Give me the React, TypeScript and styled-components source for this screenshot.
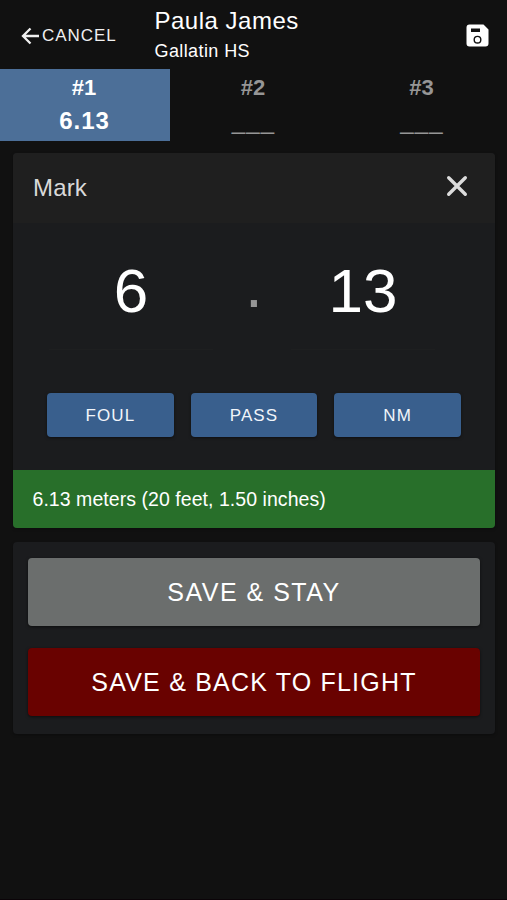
import React from "react";
import styled, { createGlobalStyle } from "styled-components";

const GlobalStyle = createGlobalStyle`
  *, *::before, *::after { box-sizing: border-box; }
  body {
    margin: 0;
    background: #111111;
    color: #ffffff;
    font-family: "Liberation Sans", Arial, sans-serif;
  }
  button { font: inherit; color: inherit; border: 0; padding: 0; background: none; }
`;

const Screen = styled.main`
  width: 507px;
  height: 900px;
  overflow: hidden;
  background: #111111;
  border-bottom: 1px solid #0b0408;
`;

const Header = styled.header`
  display: flex;
  align-items: flex-start;
  height: 69px;
  padding: 0 18px 0 21px;
`;

const CancelButton = styled.button`
  display: flex;
  align-items: center;
  width: 133.5px;
  height: 71px;
  font-size: 17px;
  letter-spacing: 0.95px;
  color: #f0f0f0;

  svg { margin-right: 2px; flex: none; }
`;

const Athlete = styled.div`
  flex: 1;
  padding-top: 6px;
  white-space: nowrap;
`;

const AthleteName = styled.h1`
  margin: 0;
  font-size: 24px;
  font-weight: 400;
  line-height: 30px;
  letter-spacing: 0.5px;
`;

const School = styled.div`
  font-size: 18px;
  line-height: 30px;
  letter-spacing: 0.4px;
`;

const SaveIconButton = styled.button`
  display: flex;
  align-items: center;
  height: 70px;
`;

const Attempts = styled.nav`
  display: grid;
  grid-template-columns: 170px 168px 169px;
  height: 72px;
`;

const Attempt = styled.button<{ $active?: boolean }>`
  display: flex;
  flex-direction: column;
  align-items: center;
  padding: 2px 1px 0 0;
  font-weight: 700;
  color: ${(p) => (p.$active ? "#ffffff" : "#969696")};
  background: ${(p) => (p.$active ? "#4c6f98" : "transparent")};
`;

const AttemptNumber = styled.span`
  padding-right: 1px;
  font-size: 22px;
  line-height: 33px;
`;

const AttemptMark = styled.span<{ $empty?: boolean }>`
  font-size: 24px;
  line-height: 34px;
  letter-spacing: ${(p) => (p.$empty ? "1.2px" : "0.9px")};
  font-weight: ${(p) => (p.$empty ? 400 : 700)};
`;

const Card = styled.section`
  margin: 12px 12px 0 13px;
  border-radius: 4px;
  overflow: hidden;
  background: #1b1c1e;
  box-shadow: 0 1px 3px rgba(0, 0, 0, 0.35);
`;

const CardHeader = styled.div`
  display: flex;
  align-items: center;
  justify-content: space-between;
  height: 70px;
  padding: 0 27px 0 20px;
  background: #1f1f1f;
  color: #d9d9d9;
`;

const CardTitle = styled.h2`
  margin: 0;
  font-size: 24px;
  font-weight: 400;
  letter-spacing: 0.15px;
`;

const CloseButton = styled.button`
  display: flex;
  margin-top: -5px;
`;

const MarkFields = styled.div`
  display: grid;
  grid-template-columns: 164px 78px 144px;
  padding-left: 36px;
  height: 127px;
`;

const MarkField = styled.div`
  padding-top: 30px;
  border-bottom: 1px solid #1e1f20;
  text-align: center;
  font-size: 62px;
  line-height: 76px;
`;

const DecimalPoint = styled.div`
  padding: 35px 0 0 4px;
  text-align: center;
  font-size: 64px;
  line-height: 54px;
  color: #969696;
`;

const QuickMarks = styled.div`
  display: grid;
  grid-template-columns: repeat(3, 1fr);
  gap: 17px;
  padding: 43px 34px 33px;
`;

const QuickMark = styled.button`
  height: 44px;
  padding-top: 1px;
  border-radius: 4px;
  background: #395f8d;
  color: #f1f5fa;
  font-size: 17px;
  letter-spacing: 1.1px;
  box-shadow: 0 1px 3px rgba(0, 0, 0, 0.5);
`;

const Conversion = styled.div`
  height: 58px;
  padding-left: 19.5px;
  background: #286f2a;
  font-size: 19.5px;
  line-height: 58px;
  letter-spacing: 0.05px;
  white-space: nowrap;
`;

const SaveActions = styled(Card)`
  display: grid;
  gap: 22px;
  margin-top: 14px;
  padding: 16px 15px 18px;
`;

const SaveButton = styled.button<{ $primary?: boolean }>`
  height: 68px;
  border-radius: 4px;
  background: ${(p) => (p.$primary ? "#690200" : "#6b6e6d")};
  font-size: 25px;
  letter-spacing: ${(p) => (p.$primary ? "1.2px" : "1.5px")};
  white-space: nowrap;
  box-shadow: 0 1px 3px rgba(0, 0, 0, 0.55);
`;

const ArrowIcon = () => (
  <svg width="19" height="18" viewBox="0 0 19 18" fill="none" stroke="#f0f0f0" strokeWidth="2.3">
    <path d="M9.5 1.5 2 9l7.5 7.5M2 9h16" />
  </svg>
);

const FloppyIcon = () => (
  <svg width="23" height="23" viewBox="0 0 23 23">
    <path
      fill="#fff"
      fillRule="evenodd"
      d="M3.5.5h14L22.5 5.5v14a3 3 0 0 1-3 3h-16a3 3 0 0 1-3-3v-16a3 3 0 0 1 3-3ZM5 4.5v3.4h9V4.5ZM11.5 11.7a4 4 0 1 0 0 8 4 4 0 0 0 0-8Z"
    />
    <circle cx="11.5" cy="15.7" r="2.6" fill="#fff" />
  </svg>
);

const CloseIcon = () => (
  <svg width="22" height="22" viewBox="0 0 22 22" stroke="#dcdcdc" strokeWidth="3.4" strokeLinecap="round">
    <path d="m2.7 2.7 16.6 16.6m0-16.6L2.7 19.3" />
  </svg>
);

export default function App() {
  return (
    <>
      <GlobalStyle />
      <Screen>
        <Header>
          <CancelButton>
            <ArrowIcon />
            CANCEL
          </CancelButton>
          <Athlete>
            <AthleteName>Paula James</AthleteName>
            <School>Gallatin HS</School>
          </Athlete>
          <SaveIconButton aria-label="Save">
            <FloppyIcon />
          </SaveIconButton>
        </Header>
        <Attempts>
          <Attempt $active>
            <AttemptNumber>#1</AttemptNumber>
            <AttemptMark>6.13</AttemptMark>
          </Attempt>
          <Attempt>
            <AttemptNumber>#2</AttemptNumber>
            <AttemptMark $empty>___</AttemptMark>
          </Attempt>
          <Attempt>
            <AttemptNumber>#3</AttemptNumber>
            <AttemptMark $empty>___</AttemptMark>
          </Attempt>
        </Attempts>
        <Card>
          <CardHeader>
            <CardTitle>Mark</CardTitle>
            <CloseButton aria-label="Clear mark">
              <CloseIcon />
            </CloseButton>
          </CardHeader>
          <MarkFields>
            <MarkField>6</MarkField>
            <DecimalPoint>.</DecimalPoint>
            <MarkField>13</MarkField>
          </MarkFields>
          <QuickMarks>
            <QuickMark>FOUL</QuickMark>
            <QuickMark>PASS</QuickMark>
            <QuickMark>NM</QuickMark>
          </QuickMarks>
          <Conversion>6.13 meters (20 feet, 1.50 inches)</Conversion>
        </Card>
        <SaveActions>
          <SaveButton>SAVE &amp; STAY</SaveButton>
          <SaveButton $primary>SAVE &amp; BACK TO FLIGHT</SaveButton>
        </SaveActions>
      </Screen>
    </>
  );
}
